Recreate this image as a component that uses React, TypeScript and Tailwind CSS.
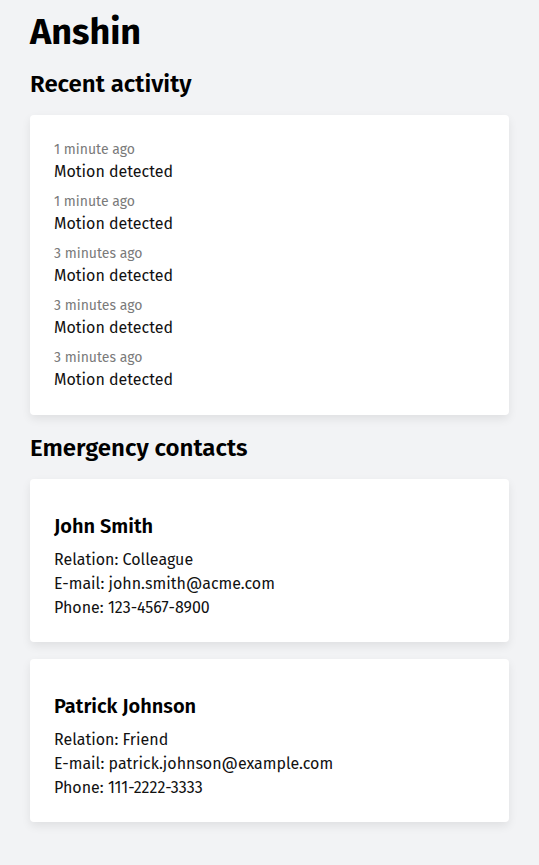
import React from "react";

const activity = [
  "1 minute ago",
  "1 minute ago",
  "3 minutes ago",
  "3 minutes ago",
  "3 minutes ago",
];

const contacts = [
  { name: "John Smith", relation: "Colleague", email: "john.smith@acme.com", phone: "123-4567-8900" },
  { name: "Patrick Johnson", relation: "Friend", email: "patrick.johnson@example.com", phone: "111-2222-3333" },
];

export default function App() {
  return (
    <div
      className="min-h-[865px] bg-[#f2f3f5] px-[30px] pt-[12px] pb-10 text-[#111]"
      style={{ fontFamily: '"Fira Sans", "Noto Sans", "Open Sans", sans-serif' }}
    >
      <h1 className="text-[36px] font-bold leading-[40px] text-black">Anshin</h1>
      <h2 className="mt-[16px] text-[24px] font-semibold leading-[32px] text-black">Recent activity</h2>
      <div className="mt-[15px] rounded-[4px] bg-white px-6 pt-[25px] pb-[23px] shadow-[0_4px_10px_rgba(0,0,0,0.08)] flex flex-col gap-2">
        {activity.map((t, i) => (
          <div key={i} className="flex flex-col">
            <span className="text-[14px] leading-[20px] text-[#7a7a7a]">{t}</span>
            <span className="text-[16px] leading-[24px] text-[#111]">Motion detected</span>
          </div>
        ))}
      </div>
      <h2 className="mt-[17px] text-[24px] font-semibold leading-[32px] text-black">Emergency contacts</h2>
      <div className="mt-[15px] flex flex-col gap-[17px]">
        {contacts.map((c) => (
          <div
            key={c.name}
            className="rounded-[4px] bg-white px-6 pt-[33px] pb-[22px] shadow-[0_4px_10px_rgba(0,0,0,0.08)]"
          >
            <h3 className="text-[20px] font-semibold leading-[28px] text-black">{c.name}</h3>
            <div className="mt-[8px] text-[16px] leading-[24px] text-[#111]">
              <p>Relation: {c.relation}</p>
              <p>E-mail: {c.email}</p>
              <p>Phone: {c.phone}</p>
            </div>
          </div>
        ))}
      </div>
    </div>
  );
}
